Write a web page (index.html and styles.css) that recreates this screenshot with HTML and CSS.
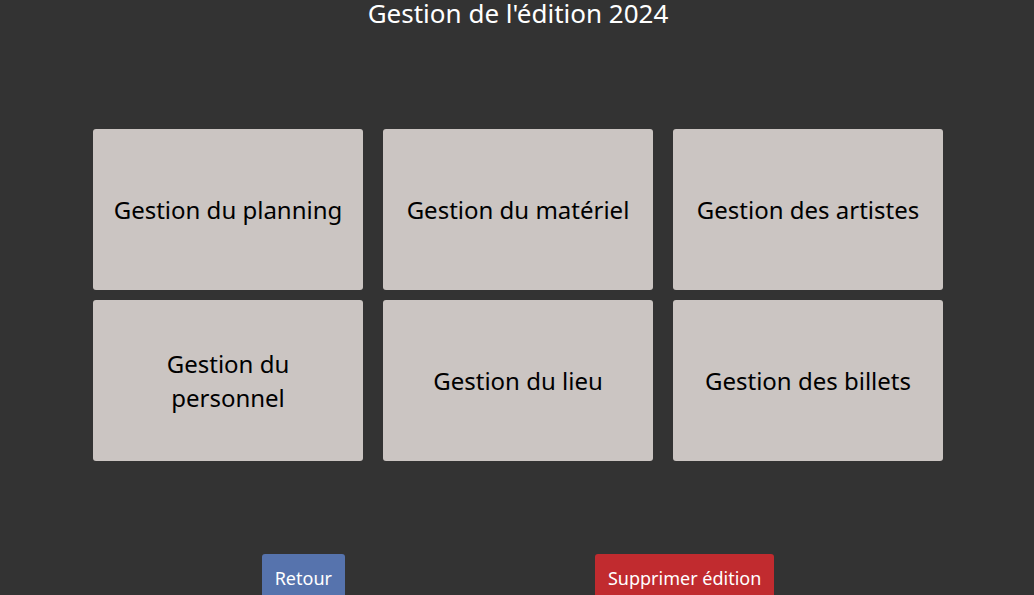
FILE: index.html
```html
<!DOCTYPE html>
<html lang="fr">
<head>
<meta charset="utf-8">
<title>Gestion de l'édition 2024</title>
<link rel="stylesheet" href="styles.css">
</head>
<body>
<main class="page">
  <h1 class="title">Gestion de l'édition 2024</h1>
  <div class="grid">
    <button class="card">Gestion du planning</button>
    <button class="card">Gestion du matériel</button>
    <button class="card">Gestion des artistes</button>
    <button class="card">Gestion du personnel</button>
    <button class="card">Gestion du lieu</button>
    <button class="card">Gestion des billets</button>
  </div>
  <div class="actions">
    <button class="btn btn-back">Retour</button>
    <button class="btn btn-delete">Supprimer édition</button>
  </div>
</main>
</body>
</html>
```
FILE: styles.css
```css
html, body {
  margin: 0;
  padding: 0;
  background: #333333;
  font-family: "Noto Sans", "Open Sans", sans-serif;
}
.page {
  display: flex;
  flex-direction: column;
  align-items: center;
  padding-left: 2px;
}
.title {
  margin: 0;
  color: #ffffff;
  font-size: 26px;
  font-weight: 400;
  line-height: 26px;
  padding-top: 0;
}
.grid {
  margin-top: 103px;
  display: grid;
  grid-template-columns: repeat(3, 270px);
  grid-auto-rows: 161px;
  column-gap: 20px;
  row-gap: 10px;
}
.card {
  background: #cbc5c2;
  border: none;
  border-radius: 3px;
  color: #000000;
  font-family: inherit;
  font-size: 24px;
  line-height: 34px;
  padding: 0 20px;
  text-align: center;
}
.actions {
  margin-top: 93px;
  display: flex;
  gap: 250px;
}
.btn {
  border: none;
  border-radius: 3px;
  color: #ffffff;
  font-family: inherit;
  font-size: 18px;
  line-height: 24px;
  padding: 12px 13px;
}
.btn-back {
  background: #5673ad;
}
.btn-delete {
  background: #c12b2f;
}
```
